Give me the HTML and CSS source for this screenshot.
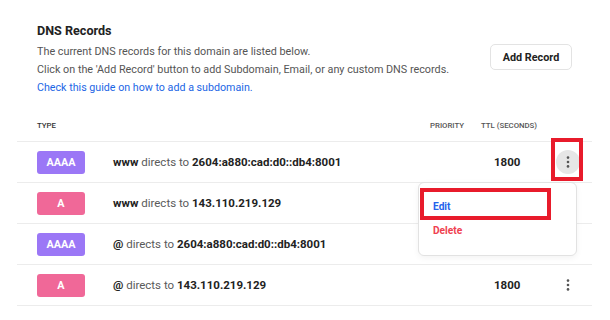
FILE: index.html
```html
<!DOCTYPE html>
<html lang="en">
<head>
  <meta charset="UTF-8" />
  <title>DNS Records</title>
  <link rel="stylesheet" href="styles.css">
</head>
<body>

  <div class="page">
    <div class="intro">
      <div class="intro-text">
        <div class="title">DNS Records</div>
        <div class="desc">The current DNS records for this domain are listed below.</div>
        <div class="desc">Click on the 'Add Record' button to add Subdomain, Email, or any custom DNS records.</div>
        <a class="guide-link" href="#">Check this guide on how to add a subdomain.</a>
      </div>
      <button class="add-btn">Add Record</button>
    </div>

    <div class="records">
      <div class="row head">
        <div>Type</div>
        <div></div>
        <div class="muted">Priority</div>
        <div class="muted">TTL (seconds)</div>
        <div></div>
      </div>

      <div class="row">
        <div><span class="badge aaaa">AAAA</span></div>
        <div class="value"><b>www</b> directs to <b>2604:a880:cad:d0::db4:8001</b></div>
        <div></div>
        <div class="ttl">1800</div>
        <div class="action"><span class="kebab open">
          <svg width="4" height="12" viewBox="0 0 4 12"><circle cx="2" cy="1.6" r="1.3"/><circle cx="2" cy="6" r="1.3"/><circle cx="2" cy="10.4" r="1.3"/></svg>
        </span></div>
      </div>

      <div class="row">
        <div><span class="badge a">A</span></div>
        <div class="value"><b>www</b> directs to <b>143.110.219.129</b></div>
        <div></div>
        <div class="ttl"></div>
        <div class="action"></div>
      </div>

      <div class="row">
        <div><span class="badge aaaa">AAAA</span></div>
        <div class="value"><b>@</b> directs to <b>2604:a880:cad:d0::db4:8001</b></div>
        <div></div>
        <div class="ttl"></div>
        <div class="action"></div>
      </div>

      <div class="row">
        <div><span class="badge a">A</span></div>
        <div class="value"><b>@</b> directs to <b>143.110.219.129</b></div>
        <div></div>
        <div class="ttl">1800</div>
        <div class="action"><span class="kebab">
          <svg width="4" height="12" viewBox="0 0 4 12"><circle cx="2" cy="1.6" r="1.3"/><circle cx="2" cy="6" r="1.3"/><circle cx="2" cy="10.4" r="1.3"/></svg>
        </span></div>
      </div>

      <!-- menu of the first row, with the highlight marks -->
      <div class="menu">
        <div class="menu-item edit">Edit</div>
        <div class="menu-item delete">Delete</div>
        <div class="mark mark-edit"></div>
      </div>
      <div class="mark mark-kebab"></div>
    </div>
  </div>

</body>
</html>
```

FILE: styles.css
```css
body {
  margin: 0;
  font-family: Roboto, "Liberation Sans", sans-serif;
  background: #ffffff;
  color: #222;
}

.page {
  padding-top: 22px;
}

.intro {
  display: flex;
  justify-content: space-between;
  align-items: flex-start;
  padding: 0 38px 0 37px;
}

.title {
  font-size: 12.6px;
  font-weight: 700;
  line-height: 18px;
  color: #222;
  margin-bottom: 3px;
}

.desc {
  font-size: 10.8px;
  line-height: 18px;
  color: #555;
}

.guide-link {
  display: block;
  font-size: 10.7px;
  line-height: 17px;
  color: #1c66e5;
  text-decoration: none;
}

.add-btn {
  margin-top: 22px;
  width: 82px;
  height: 26px;
  background: #fff;
  border: 1px solid #e3e3e3;
  border-radius: 5px;
  font-family: inherit;
  font-size: 10.8px;
  font-weight: 700;
  color: #222;
  padding: 0;
}

.records {
  position: relative;
  margin: 13px 18px 0 17px;
}

.row {
  display: grid;
  grid-template-columns: 76px 317px 51px 63px 1fr;
  align-items: center;
  height: 40px;
  padding-left: 20px;
  border-bottom: 1px solid #ececec;
  font-size: 11.5px;
}

.row.head {
  height: 32px;
  font-size: 7.8px;
  font-weight: 500;
  text-transform: uppercase;
  color: #333;
}

.row.head .muted {
  color: #555;
}

.badge {
  display: inline-flex;
  align-items: center;
  justify-content: center;
  width: 48px;
  height: 23px;
  border-radius: 3px;
  color: #fff;
  font-size: 10.8px;
  font-weight: 700;
}

.aaaa {
  background: #9b77f6;
}

.a {
  background: #f06898;
}

.value {
  color: #5a5a5a;
}

.value b {
  color: #222;
  font-weight: 700;
}

.ttl {
  padding-left: 13px;
  font-weight: 700;
  color: #222;
}

.action {
  display: flex;
  justify-content: center;
}

.kebab {
  display: flex;
  align-items: center;
  justify-content: center;
  width: 24px;
  height: 24px;
  border-radius: 50%;
  fill: #555;
}

.kebab.open {
  background: #e6e6e6;
}

.menu {
  position: absolute;
  top: 73px;
  left: 401px;
  width: 157px;
  height: 60px;
  padding-top: 12px;
  background: #fff;
  border: 1px solid #e2e2e2;
  border-radius: 6px;
  box-shadow: 0 2px 6px rgba(0, 0, 0, 0.05);
}

.menu-item {
  height: 24px;
  line-height: 24px;
  padding-left: 14px;
  font-size: 10.2px;
  font-weight: 700;
}

.edit {
  color: #2463eb;
}

.delete {
  color: #ef4150;
}

.mark {
  position: absolute;
  border: 4px solid #e81b2b;
  box-sizing: border-box;
}

.mark-edit {
  top: 5px;
  left: 1px;
  width: 131px;
  height: 32px;
}

.mark-kebab {
  top: 29px;
  left: 534px;
  width: 32px;
  height: 43px;
}
```
